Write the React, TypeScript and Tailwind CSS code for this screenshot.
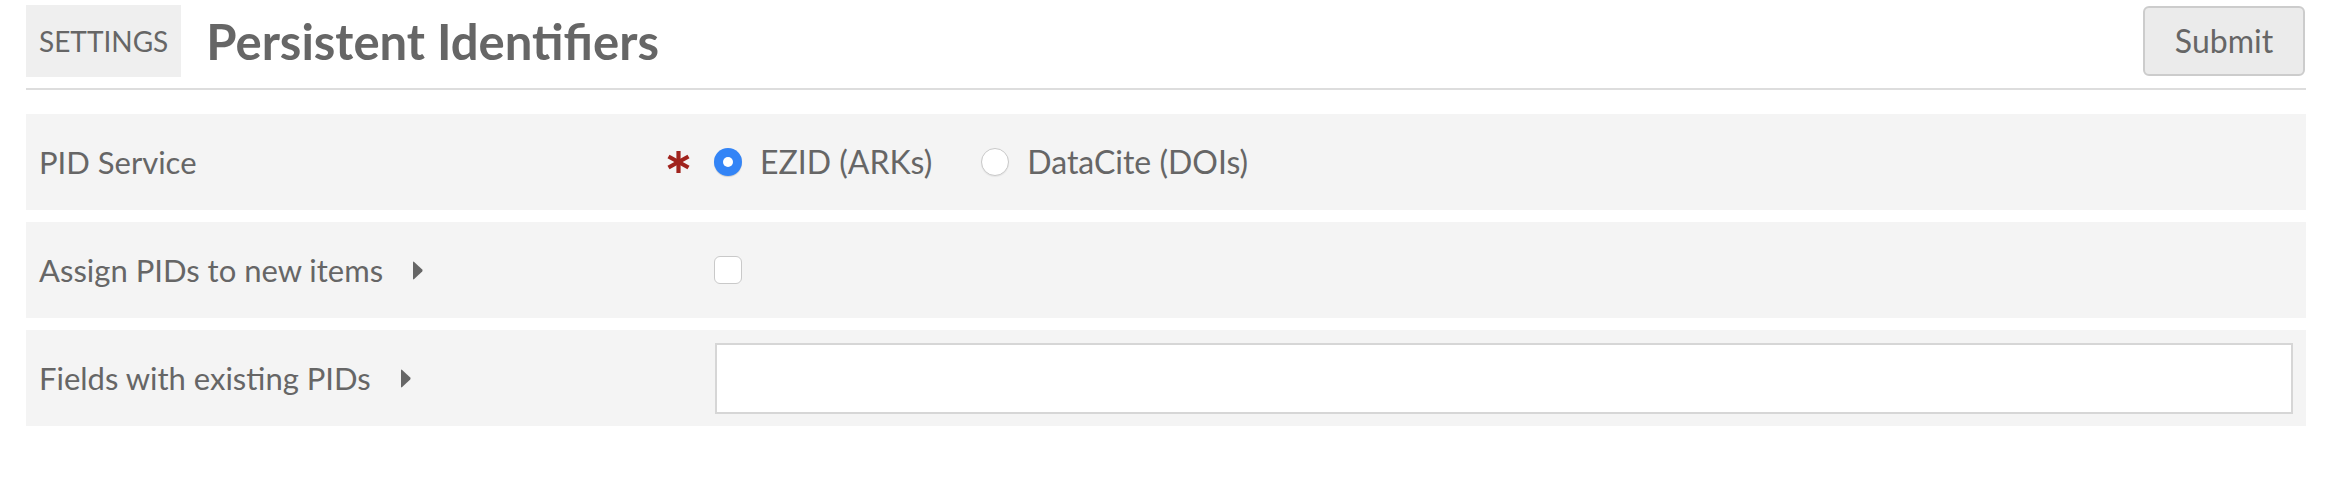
import React from "react";

function Caret() {
  return (
    <svg width="11" height="19" viewBox="0 0 11 19" className="shrink-0">
      <path d="M1 1.5 Q1 0 2.2 1 L10.2 8.6 Q11 9.5 10.2 10.4 L2.2 18 Q1 19 1 17.5 Z" fill="#666666" />
    </svg>
  );
}

function Asterisk() {
  return (
    <svg width="23" height="22" viewBox="0 0 23 22">
      <g stroke="#a0231d" strokeWidth="4.2" strokeLinecap="butt">
        <line x1="11.5" y1="0" x2="11.5" y2="22" />
        <line x1="1.5" y1="5.5" x2="21.5" y2="16.5" />
        <line x1="1.5" y1="16.5" x2="21.5" y2="5.5" />
      </g>
    </svg>
  );
}

export default function App() {
  return (
    <div className="min-h-[484px] bg-white px-[26px] font-['Lato',sans-serif] text-[#666666]">
      <header className="flex h-[90px] items-center justify-between border-b-2 border-[#dddddd] pb-[6px]">
        <div className="flex items-center gap-[25px]">
          <div className="flex h-[72px] items-center bg-[#efefef] px-[13px] text-[28px] leading-none">
            SETTINGS
          </div>
          <h1 className="text-[49px] font-bold leading-none">Persistent Identifiers</h1>
        </div>
        <button className="mr-[1px] h-[70px] w-[162px] rounded-[6px] border-2 border-[#cccccc] bg-[#ebebeb] text-[32px] leading-none text-[#666666]">
          Submit
        </button>
      </header>

      <div className="mt-[24px] flex flex-col gap-[12px]">
        <div className="flex h-[96px] items-center bg-[#f4f4f4] px-[13px]">
          <div className="w-[628px] text-[31px] leading-none">PID Service</div>
          <div className="flex w-[47px] items-center">
            <Asterisk />
          </div>
          <div className="flex items-center text-[32px] leading-none">
            <span className="flex h-[28px] w-[28px] items-center justify-center rounded-full bg-[#3384f6] shadow-[0_1px_1px_rgba(0,0,0,0.15)]">
              <span className="h-[10px] w-[10px] rounded-full bg-white" />
            </span>
            <span className="ml-[18px]">EZID (ARKs)</span>
            <span className="ml-[49px] h-[28px] w-[28px] rounded-full border border-[#c9c9c9] bg-white shadow-[0_1px_1px_rgba(0,0,0,0.06)]" />
            <span className="ml-[18px]">DataCite (DOIs)</span>
          </div>
        </div>

        <div className="flex h-[96px] items-center bg-[#f4f4f4] px-[13px]">
          <div className="flex w-[675px] items-center gap-[29px] text-[31px] leading-none">
            <span>Assign PIDs to new items</span>
            <Caret />
          </div>
          <span className="h-[28px] w-[28px] rounded-[6px] border border-[#c9c9c9] bg-white" />
        </div>

        <div className="flex h-[96px] items-center bg-[#f4f4f4] px-[13px]">
          <div className="flex w-[676px] shrink-0 items-center gap-[29px] text-[31px] leading-none">
            <span>Fields with existing PIDs</span>
            <Caret />
          </div>
          <input className="h-[71px] flex-1 border-2 border-[#d6d6d6] bg-white outline-none" />
        </div>
      </div>
    </div>
  );
}
